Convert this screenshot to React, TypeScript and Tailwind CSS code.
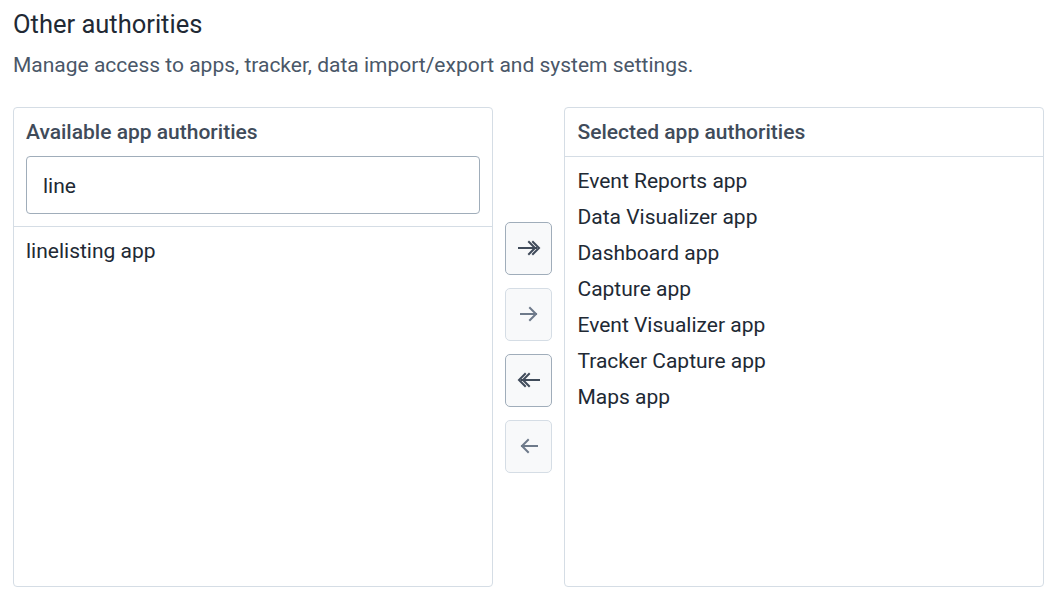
import React from "react";

const selected = [
  "Event Reports app",
  "Data Visualizer app",
  "Dashboard app",
  "Capture app",
  "Event Visualizer app",
  "Tracker Capture app",
  "Maps app",
];

function ArrowIcon({ kind }: { kind: "allRight" | "right" | "allLeft" | "left" }) {
  // shapes drawn on a 24x24 box, flipped for the left-pointing ones
  const flip = kind === "allLeft" || kind === "left";
  return (
    <svg
      width="24"
      height="24"
      viewBox="0 0 24 24"
      fill="none"
      stroke="currentColor"
      strokeWidth="2"
      strokeLinecap="square"
      strokeLinejoin="miter"
      style={flip ? { transform: "scaleX(-1)" } : undefined}
    >
      {kind === "allRight" || kind === "allLeft" ? (
        <>
          <path d="M2 12h17" />
          <path d="M12 6l6 6-6 6" />
          <path d="M16 6l6 6-6 6" />
        </>
      ) : (
        <>
          <path d="M4 12h15" />
          <path d="M13 6l6 6-6 6" />
        </>
      )}
    </svg>
  );
}

function MoveButton({ kind, disabled }: { kind: "allRight" | "right" | "allLeft" | "left"; disabled?: boolean }) {
  return (
    <button
      type="button"
      disabled={disabled}
      className={
        disabled
          ? "w-[47px] h-[53px] flex items-center justify-center rounded-[5px] border border-[#d5dde5] bg-[#f8f9fa] text-[#6e7a8a]"
          : "w-[47px] h-[53px] flex items-center justify-center rounded-[5px] border border-[#a0adba] bg-[#f8f9fa] text-[#404b5a]"
      }
    >
      <ArrowIcon kind={kind} />
    </button>
  );
}

export default function App() {
  return (
    <div className="w-[1057px] h-[603px] bg-white px-[13px] pt-[9px] font-['Roboto',sans-serif] text-[#212934]">
      <h2 className="text-[25.5px] leading-[30px] font-normal text-[#212934]">Other authorities</h2>
      <p className="mt-[14px] text-[21px] leading-[24px] text-[#4a5768]">
        Manage access to apps, tracker, data import/export and system settings.
      </p>

      <div className="mt-[30px] flex">
        {/* Lista disponível */}
        <div className="w-[480px] h-[480px] flex flex-col rounded-[4px] border border-[#d5dde5]">
          <div className="px-[12px] pt-[12px] pb-[12px] border-b border-[#d5dde5]">
            <div className="text-[21px] leading-[24px] font-medium text-[#404b5a]">Available app authorities</div>
            <div className="mt-[12px] h-[58px] rounded-[4px] border border-[#a0adba] flex items-center px-[16px] pt-[3px] text-[21px] text-[#212934]">
              line
            </div>
          </div>
          <div className="px-[12px] pt-[7px]">
            <div className="h-[36px] flex items-center text-[21px]">linelisting app</div>
          </div>
        </div>

        {/* Botões */}
        <div className="w-[72px] flex flex-col items-center justify-center gap-[13px]">
          <MoveButton kind="allRight" />
          <MoveButton kind="right" disabled />
          <MoveButton kind="allLeft" />
          <MoveButton kind="left" disabled />
        </div>

        {/* Lista selecionada */}
        <div className="w-[480px] h-[480px] flex flex-col rounded-[4px] border border-[#d5dde5]">
          <div className="px-[12px] pt-[12px] pb-[12px] border-b border-[#d5dde5]">
            <div className="text-[21px] leading-[24px] font-medium text-[#404b5a]">Selected app authorities</div>
          </div>
          <div className="px-[12px] pt-[7px]">
            {selected.map((item) => (
              <div key={item} className="h-[36px] flex items-center text-[21px]">
                {item}
              </div>
            ))}
          </div>
        </div>
      </div>
    </div>
  );
}
